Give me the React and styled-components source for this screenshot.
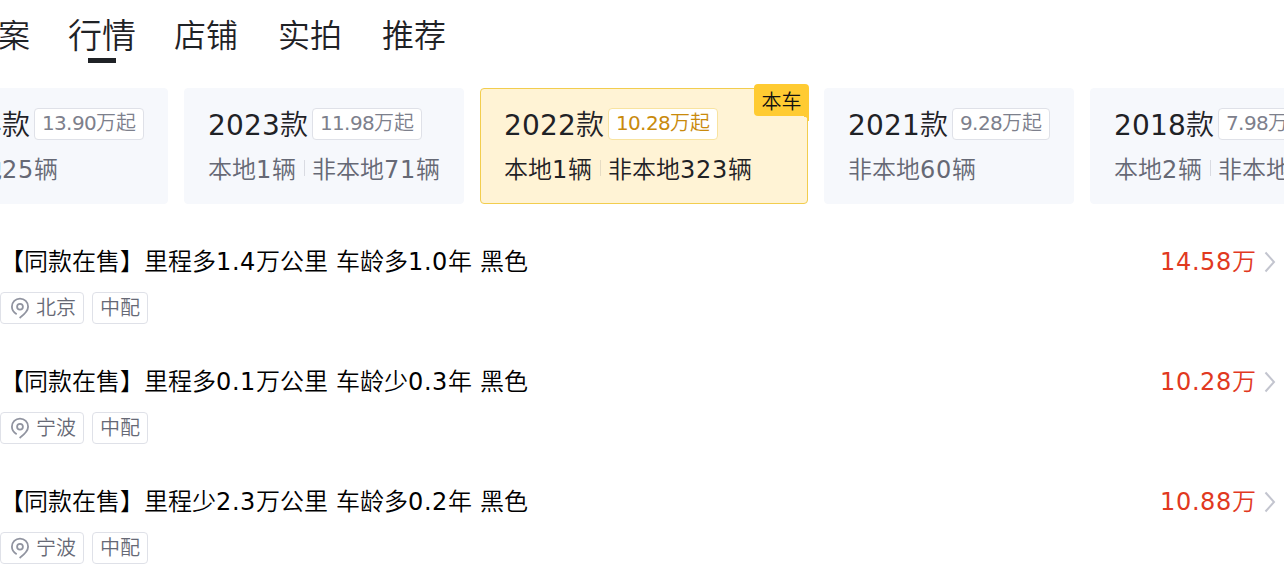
import React, { Fragment, useState } from 'react';
import styled, { createGlobalStyle } from 'styled-components';

const GlobalStyle = createGlobalStyle`
  * {
    box-sizing: border-box;
  }

  body {
    margin: 0;
    background-color: #fff;
    color: #1f2226;
    font-family: 'DejaVu Sans', 'Noto Sans CJK SC', sans-serif;
    font-weight: 350;
    overflow: hidden;
  }
`;

const Page = styled.main`
  width: 1284px;
  height: 564px;
  overflow: hidden;
`;

// Tabs
const TabBar = styled.nav`
  display: flex;
  gap: 40px;
  height: 88px;
  margin-left: -34px;
`;

const Tab = styled.button`
  display: flex;
  flex-direction: column;
  align-items: center;
  flex: none;
  width: 64px;
  height: 63px;
  padding: 14px 0 0;
  border: none;
  background: none;
  color: inherit;
  font-family: inherit;
  font-weight: inherit;
  font-size: ${({ $active }) => ($active ? '34px' : '32px')};
  line-height: 44px;
  white-space: nowrap;
  cursor: pointer;
`;

const TabLine = styled.span`
  flex: none;
  width: 28px;
  height: 5px;
  background-color: #1f2226;
`;

// Model year cards
const CardList = styled.section`
  display: flex;
  gap: 16px;
  margin-left: -94px;
`;

const Card = styled.article`
  position: relative;
  flex: none;
  width: ${({ $width }) => $width}px;
  height: 116px;
  padding: 19px 23px 0;
  border: 1px solid ${({ $current }) => ($current ? '#f2cd4e' : '#f6f8fc')};
  border-radius: 4px;
  background-color: ${({ $current }) => ($current ? '#fff3d5' : '#f6f8fc')};
`;

const CardHead = styled.div`
  display: flex;
  gap: 4px;
  height: 32px;
`;

const Year = styled.h3`
  margin: 0;
  font-size: 28px;
  font-weight: inherit;
  line-height: 35px;
  white-space: nowrap;
`;

const PriceTag = styled.span`
  height: 32px;
  padding: 0 7px;
  border: 1px solid ${({ $current }) => ($current ? '#f8e3a0' : '#dfe1e8')};
  border-radius: 4px;
  background-color: #fff;
  color: ${({ $current }) => ($current ? '#c98a0c' : '#7d808c')};
  font-size: 20px;
  line-height: 29px;
  white-space: nowrap;
`;

const Counts = styled.div`
  display: flex;
  align-items: center;
  margin-top: 14px;
  color: ${({ $current }) => ($current ? '#1f2226' : '#666975')};
  font-size: 24px;
  line-height: 33px;
  white-space: nowrap;
`;

const Divider = styled.i`
  width: 1px;
  height: 16px;
  margin: -5px 7px 0 8px;
  background-color: ${({ $current }) => ($current ? '#e6dcc4' : '#d9dbe2')};
`;

const Badge = styled.span`
  position: absolute;
  top: -5px;
  right: -2px;
  width: 55px;
  height: 32px;
  border-radius: 4px 4px 0 4px;
  background-color: #ffcb32;
  color: #111;
  font-size: 20px;
  line-height: 36px;
  text-align: center;

  &::after {
    content: '';
    position: absolute;
    top: 32px;
    right: 0;
    width: 5px;
    height: 5px;
    background: radial-gradient(circle at 0 100%, transparent 4px, #ffcb32 4.5px);
  }
`;

// Listings
const Listings = styled.ul`
  margin: 38px 0 0;
  padding: 0;
  list-style: none;
`;

const Listing = styled.li`
  height: 120px;
`;

const ListingHead = styled.div`
  display: flex;
  align-items: center;
  height: 40px;
  padding-right: 8px;
  font-size: 24px;
  line-height: 40px;
`;

const ListingTitle = styled.span`
  flex: 1;
  color: #000;
  white-space: pre;
  word-spacing: 0.37px;
`;

const ListingPrice = styled.span`
  margin-right: 8px;
  color: #e1391f;
`;

const Tags = styled.div`
  display: flex;
  gap: 8px;
  margin-top: 10px;
`;

const Tag = styled.span`
  display: flex;
  align-items: center;
  height: 32px;
  padding: 0 7px;
  border: 1px solid #dfe1e8;
  border-radius: 4px;
  color: #666975;
  font-size: 20px;
  line-height: 30px;

  svg {
    margin-right: 4px;
  }
`;

const Digits = styled.span`
  font-weight: 400;
  letter-spacing: ${({ $spacing }) => $spacing}px;
`;

// Digits sit on a whole pixel grid, the rest of the text keeps its own width
function Text({ children, spacing }) {
  return children.split(/(\d+|\.)/).map((part, i) =>
    i % 2 ? (
      <Digits key={i} $spacing={part === '.' ? spacing / 2 : spacing}>{part}</Digits>
    ) : (
      <Fragment key={i}>{part}</Fragment>
    )
  );
}

function PinIcon() {
  return (
    <svg width="24" height="24" viewBox="0 0 24 24" fill="none" stroke="#9194a0" strokeWidth="1.8">
      <path d="M8.700 18.200C5.700 16.400 3.900 13.900 3.900 10.700a8.100 8.100 0 0 1 16.200 0c0 4.300-4 7.900-8.500 11.200" />
      <circle cx="12" cy="10.700" r="2.900" />
    </svg>
  );
}

function Chevron() {
  return (
    <svg width="12" height="24" viewBox="0 0 12 24" fill="none" stroke="#c3c5cf" strokeWidth="2">
      <path d="M1.500 2.500 10 12l-8.500 9.500" />
    </svg>
  );
}

const tabs = ['档案', '行情', '店铺', '实拍', '推荐'];

const models = [
  { year: '2024款', price: '13.90万起', counts: ['非本地25辆'], width: 262 },
  { year: '2023款', price: '11.98万起', counts: ['本地1辆', '非本地71辆'], width: 280 },
  { year: '2022款', price: '10.28万起', counts: ['本地1辆', '非本地323辆'], width: 328, current: true },
  { year: '2021款', price: '9.28万起', counts: ['非本地60辆'], width: 250 },
  { year: '2018款', price: '7.98万起', counts: ['本地2辆', '非本地12辆'], width: 280 },
];

const listings = [
  { title: '【同款在售】里程多1.4万公里 车龄多1.0年 黑色', price: '14.58万', city: '北京' },
  { title: '【同款在售】里程多0.1万公里 车龄少0.3年 黑色', price: '10.28万', city: '宁波' },
  { title: '【同款在售】里程少2.3万公里 车龄多0.2年 黑色', price: '10.88万', city: '宁波' },
];

function App() {
  const [activeTab, setActiveTab] = useState('行情');

  return (
    <Page>
      <GlobalStyle />
      <TabBar>
        {tabs.map((tab) => (
          <Tab key={tab} $active={tab === activeTab} onClick={() => setActiveTab(tab)}>
            {tab}
            {tab === activeTab && <TabLine />}
          </Tab>
        ))}
      </TabBar>

      <CardList>
        {models.map(({ year, price, counts, width, current }) => (
          <Card key={year} $width={width} $current={current}>
            {current && <Badge>本车</Badge>}
            <CardHead>
              <Year><Text spacing={0.185}>{year}</Text></Year>
              <PriceTag $current={current}><Text spacing={-0.725}>{price}</Text></PriceTag>
            </CardHead>
            <Counts $current={current}>
              {counts.map((count, i) => (
                <Fragment key={count}>
                  {i > 0 && <Divider $current={current} />}
                  <span><Text spacing={0.73}>{count}</Text></span>
                </Fragment>
              ))}
            </Counts>
          </Card>
        ))}
      </CardList>

      <Listings>
        {listings.map(({ title, price, city }) => (
          <Listing key={title}>
            <ListingHead>
              <ListingTitle><Text spacing={0.73}>{title}</Text></ListingTitle>
              <ListingPrice><Text spacing={0.73}>{price}</Text></ListingPrice>
              <Chevron />
            </ListingHead>
            <Tags>
              <Tag><PinIcon />{city}</Tag>
              <Tag>中配</Tag>
            </Tags>
          </Listing>
        ))}
      </Listings>
    </Page>
  );
}

export default App;
